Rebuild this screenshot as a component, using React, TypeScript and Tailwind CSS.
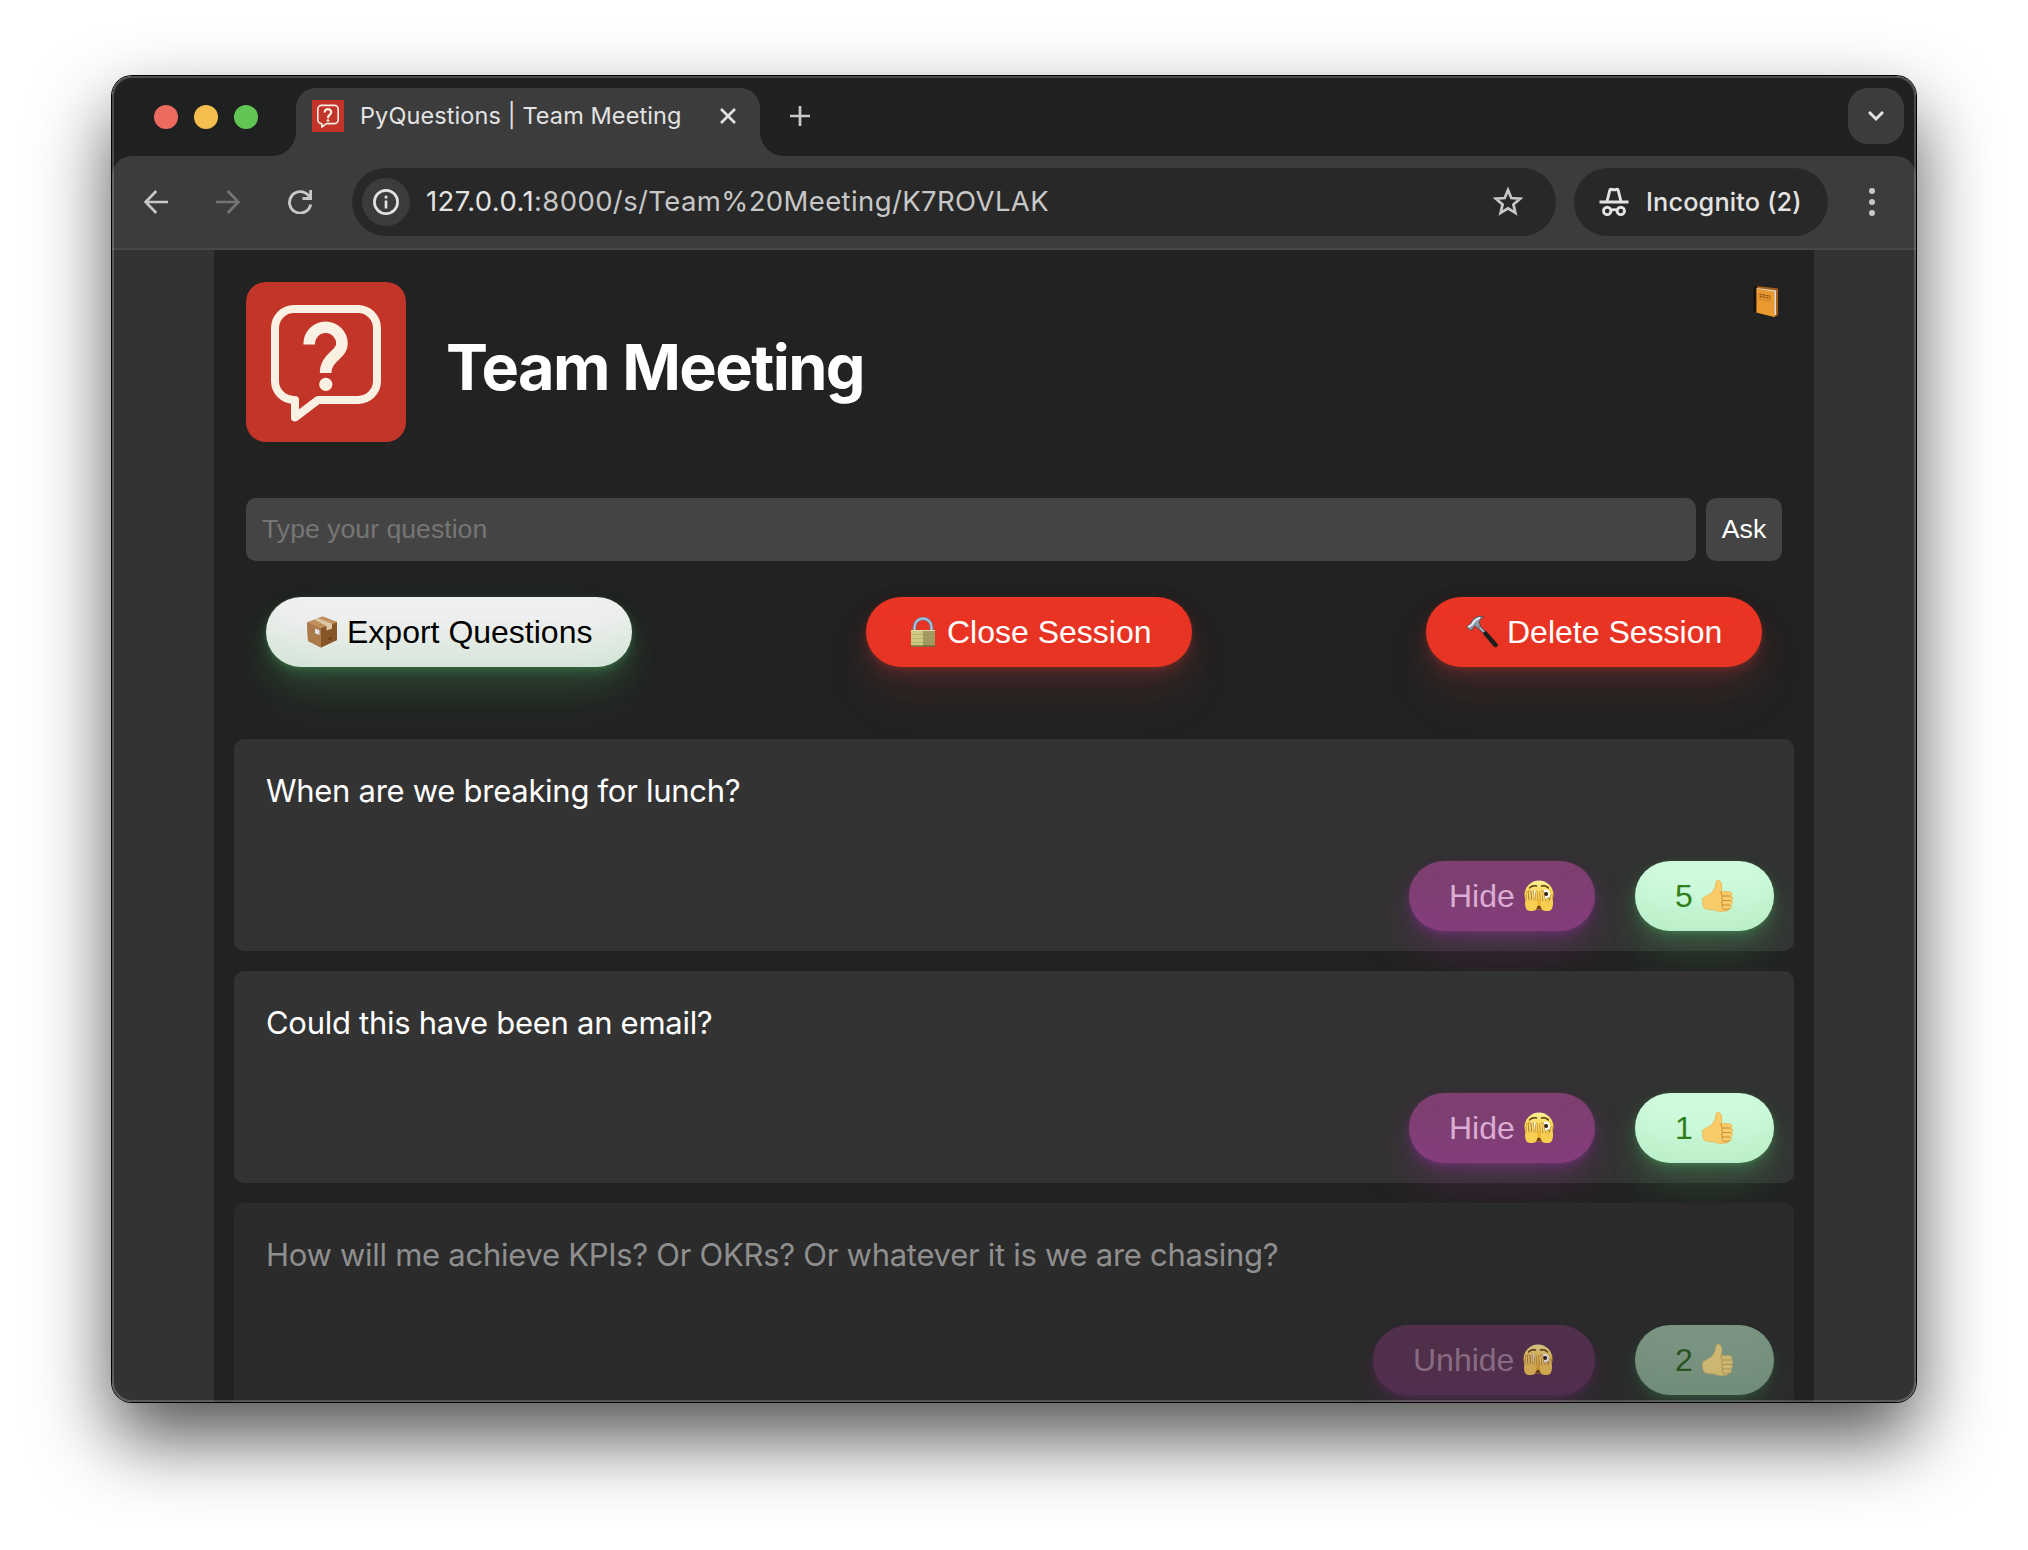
import React from "react";

function Logo({ className }: { className: string }) {
  return (
    <svg viewBox="0 0 160 160" className={className} fill="none">
      <rect width="160" height="160" fill="#c23528" />
      <path
        d="M72 118H112a19 19 0 0 0 19-19V46a19 19 0 0 0-19-19H48a19 19 0 0 0-19 19V99a19 19 0 0 0 19 19h1V135.5Z"
        stroke="#fbf1e3"
        strokeWidth="8"
        strokeLinejoin="round"
      />
      <path d="M63.2 62.5V61.7A16.4 16.4 0 0 1 96 61.7C96 73 79.6 75 79.6 91" stroke="#fbf1e3" strokeWidth="11.6" />
      <circle cx="79.8" cy="102.3" r="6.6" fill="#fbf1e3" />
    </svg>
  );
}

function BookEmoji() {
  return (
    <svg viewBox="0 0 28 34" className="h-[34px] w-[28px]">
      <path d="M4 1L26 3.5V30L22.500 32L4 27.500Z" fill="#a8611a" />
      <path d="M4.500 3L24 5.500V29.500L22 31L8 27Z" fill="#dcdfe6" />
      <path d="M1.500 2Q3 .6 6 1.400L4.600 3V27.500L1.500 26.500Z" fill="#15130f" />
      <path d="M4.500 3.600L22.600 6.600V32L4.500 27.400Z" fill="#e9992f" />
      <path d="M7.500 9.200L18.500 11.200M7.500 11.500L18.500 13.500" stroke="#9a5a16" strokeWidth="1.500" strokeDasharray="2.500 .8" />
      <path d="M7.500 14.200L18.500 16.200" stroke="#b97522" strokeWidth=".7" />
    </svg>
  );
}

function BoxEmoji() {
  return (
    <svg viewBox="0 0 32 34" className="h-[34px] w-[32px]">
      <path d="M1 7.500L16.500 1.500L31 7V25L15 32.500L2 26Z" fill="#a87748" />
      <path d="M1 7.500L15 13V32.500L2 26Z" fill="#ac7b4c" />
      <path d="M15 13L31 7.500V25L15 32.500Z" fill="#865629" />
      <path d="M1 7.500L16.500 1.500L31 7L15 13Z" fill="#c0915f" />
      <path d="M8.500 4.600L12 3.200L26 8.800V13.500L20.500 15.500V11Z" fill="#ddc7a8" />
      <path d="M9 13.500L13.500 15.300V20L9 18.200Z" fill="#dfe3ea" />
      <path d="M21.500 23.500L26 21.500L24 25.500Z" fill="#5d3915" />
    </svg>
  );
}

function LockEmoji() {
  return (
    <svg viewBox="0 0 32 34" className="h-[34px] w-[32px]" fill="none">
      <path d="M8.500 16V12a8.500 8.500 0 0 1 17 0V16" stroke="#6d8fae" strokeWidth="3.400" />
      <path d="M8.500 16V12a8.500 8.500 0 0 1 17 0V16" stroke="#b5cfe6" strokeWidth="1.500" />
      <path d="M5 15H29V31.500H5Z" fill="#a39b62" />
      <path d="M5 15H17V31.500H5Z" fill="#cfc983" />
      <path d="M5 15.500H29" stroke="#dedaa6" />
      <path d="M5 19.500H29M5 23.500H29M5 27.500H29" stroke="#8f8852" strokeOpacity=".3" />
      <path d="M5 31H29" stroke="#6c6736" strokeWidth="1.400" />
    </svg>
  );
}

function HammerEmoji() {
  return (
    <svg viewBox="0 0 32 34" className="h-[34px] w-[32px]" fill="none">
      <path d="M12 11L20 19" stroke="#49525e" strokeWidth="3.400" />
      <path d="M12 11L20 19" stroke="#c3cdd9" strokeWidth="1.600" />
      <path d="M19.500 18.500L29.500 30" stroke="#1d1f1f" strokeWidth="4.400" strokeLinecap="round" />
      <path
        d="M.8 11.500L4.500 9C5.500 6 8 2.500 12 1.500L18 1.200C15 3 13.500 5 13.300 8L14.500 11L11.500 13.500L9.500 11C7.800 10.800 7.200 12 7 14L4 15.500Z"
        fill="#8e9bab"
        stroke="#3b4149"
        strokeWidth=".7"
      />
      <path d="M2 12L5.800 9.800L9 5.500L14 2.500" stroke="#e8eef6" strokeWidth="2" />
    </svg>
  );
}

function PeekEmoji() {
  return (
    <svg viewBox="0 0 32 34" className="h-[34px] w-[32px]" fill="none">
      <defs>
        <linearGradient id="peekFace" x1="0" y1="0" x2="0" y2="1">
          <stop offset="0" stopColor="#fff29a" />
          <stop offset=".45" stopColor="#f8d348" />
          <stop offset="1" stopColor="#e2991f" />
        </linearGradient>
      </defs>
      <circle cx="16" cy="16" r="14.500" fill="url(#peekFace)" />
      <path d="M6.500 9Q9.500 6 13.500 7M18.500 7Q22.500 6 25.500 9" stroke="#5a3a0c" strokeWidth="1.400" strokeLinecap="round" />
      <ellipse cx="9.500" cy="15" rx="4.200" ry="4.300" fill="#fffbe8" />
      <ellipse cx="22.700" cy="15.200" rx="4.600" ry="4.600" fill="#fff" />
      <circle cx="23" cy="15" r="2.100" fill="#2a1a0a" />
      <path d="M13 28.500Q16 25 19 28.500V30H13Z" fill="#6e430f" />
      <path
        d="M3.500 30.500C1.500 27 1.500 22 3.500 18L12 18.500L14.500 21C15 25 14.500 29 12.500 31C10 32.500 5.500 32.500 3.500 30.500Z"
        fill="#f9cf52"
      />
      <path
        d="M28.500 30.500C30.500 27 30.500 22 29 18.500L24.500 21L19.500 20L17.500 22C17 25 17.500 29 19.500 31C22 32.500 26.500 32.500 28.500 30.500Z"
        fill="#f9cf52"
      />
      <path
        d="M4.300 20V13.500M7.200 20L6.600 12.700M9.900 20L9.600 12.500M13 21L13.800 13.500M18.600 21L17.800 13.500M21.300 21L19.600 12.700M25 21.500L25.500 20M28.200 20L28.300 17"
        stroke="#a87420"
        strokeWidth="2.700"
        strokeLinecap="round"
      />
      <path
        d="M4.300 20.500V13.500M7.200 20.500L6.600 12.700M9.900 20.500L9.600 12.500M13 21.500L13.800 13.500M18.600 21.500L17.800 13.500M21.300 21.500L19.600 12.700M25 22V20.500M28.200 21L28.300 17"
        stroke="#f7d468"
        strokeWidth="1.800"
        strokeLinecap="round"
      />
    </svg>
  );
}

function ThumbEmoji() {
  return (
    <svg viewBox="0 0 32 34" className="h-[34px] w-[32px]" fill="none">
      <path
        d="M1 19C2.500 17.500 6 16.500 8.500 14.500C11.500 12 13.500 8.500 14 3.500C14.200 1 17 .4 18.500 2.500C20.500 5.500 20 9 19 12.500L27.500 12.800C30.500 13 30.500 16.500 28.500 17C31.500 17.500 31.300 21 29 21.500C31 22.500 30.500 25.500 28.300 26C30 27 29.500 29.500 27.500 30L25 31.800C20 32.800 15 32.500 12.500 31C8 30.500 4 31 1.800 28.500C.4 26 .3 21 1 19Z"
        fill="#f9cc6a"
        stroke="#e8ac4c"
        strokeWidth=".7"
      />
      <path
        d="M28.500 17H20.500Q18.500 15 19 12.500M29 21.500H20.500M28.300 26H20.500M20.500 17Q18.700 19.500 20.500 21.500Q18.700 24 20.500 26Q19.500 29 21.500 30.500L27.500 30"
        stroke="#c4862f"
        strokeWidth=".9"
      />
    </svg>
  );
}

function TabFlare({ flip }: { flip?: boolean }) {
  return (
    <svg viewBox="0 0 24 24" className={flip ? "h-6 w-6 -scale-x-100" : "h-6 w-6"}>
      <path d="M24 0V24H0A24 24 0 0 0 24 0Z" fill="#3c3c3c" />
    </svg>
  );
}

function TabStrip() {
  return (
    <div className="flex h-[80px] items-end bg-[#1f2120] pl-[42px] pr-3">
      <div className="flex gap-4 self-start pt-[29px]">
        <span className="size-6 rounded-full bg-[#ed6a5e]" />
        <span className="size-6 rounded-full bg-[#f5bf4f]" />
        <span className="size-6 rounded-full bg-[#61c554]" />
      </div>
      <div className="ml-[14px] flex items-end">
        <TabFlare />
        <div className="flex h-[68px] w-[464px] items-center rounded-t-[20px] bg-[#3c3c3c] pb-[12px] pl-4 pr-6">
          <Logo className="size-8" />
          <span className="ml-[16px] whitespace-nowrap text-[23.5px] tracking-[0.1px] text-[#e3e3e3]">
            PyQuestions | Team Meeting
          </span>
          <svg viewBox="0 0 16 16" className="ml-auto size-4" stroke="#e3e3e3" strokeWidth="2.600">
            <path d="M1 1L15 15M15 1L1 15" />
          </svg>
        </div>
        <TabFlare flip />
      </div>
      <svg viewBox="0 0 20 20" className="mb-[30px] ml-[6px] size-5" stroke="#c7c7c7" strokeWidth="2.700">
        <path d="M10 0V20M0 10H20" />
      </svg>
      <div className="mb-3 ml-auto flex h-[56px] w-[56px] items-center justify-center rounded-[20px] bg-[#3c3c3c]">
        <svg viewBox="0 0 16 10" className="h-[10px] w-4" fill="none" stroke="#e3e3e3" strokeWidth="2.900">
          <path d="M1 1L8 8L15 1" />
        </svg>
      </div>
    </div>
  );
}

function Toolbar() {
  return (
    <div className="bg-[#1f2120]">
      <div className="flex h-[94px] items-center rounded-t-[20px] border-b-2 border-[#484848] bg-[#3c3c3c] pl-8 pr-[41px]">
        <svg viewBox="0 0 24 24" className="size-6" fill="none" stroke="#c7c7c7" strokeWidth="2.700">
          <path d="M24 12H2M12.300 1L1.600 12L12.300 23" />
        </svg>
        <svg viewBox="0 0 24 24" className="ml-12 size-6" fill="none" stroke="#757575" strokeWidth="2.700">
          <path d="M0 12H22M11.700 1L22.400 12L11.700 23" />
        </svg>
        <svg viewBox="0 0 24 24" className="ml-12 size-6" fill="none" stroke="#c7c7c7" strokeWidth="2.900">
          <path d="M22.700 14.500A10.700 10.700 0 1 1 20.600 5.700L22.300 8M22.700 0V8.500H14.500" />
        </svg>
        <div className="ml-10 flex h-[68px] w-[1204px] items-center rounded-full bg-[#282828] pl-[10px] pr-[33px]">
          <div className="flex size-12 items-center justify-center rounded-full bg-[#3c3c3c]">
            <svg viewBox="0 0 26 26" className="size-[26px]" fill="none" stroke="#e3e3e3" strokeWidth="2.700">
              <circle cx="13" cy="13" r="11.600" />
              <path d="M13 11.500V19.500M13 6.700V9.400" />
            </svg>
          </div>
          <span className="ml-[16px] whitespace-nowrap text-[27.5px] tracking-[0.38px] text-[#c7c7c7]">
            <span className="text-[#e3e3e3]">127.0.0.1</span>:8000/s/Team%20Meeting/K7ROVLAK
          </span>
          <svg viewBox="0 0 30 30" className="ml-auto size-[30px]" fill="none" stroke="#c7c7c7" strokeWidth="2.700">
            <path d="M15 3L18.300 11L27 11.700L20.400 17.400L22.400 26L15 21.400L7.600 26L9.600 17.400L3 11.700L11.700 11Z" />
          </svg>
        </div>
        <div className="ml-[18px] flex h-[68px] w-[254px] items-center rounded-full bg-[#282828] pl-[25px]">
          <svg viewBox="0 0 30 30" className="size-[30px]" fill="none" stroke="#e3e3e3" strokeWidth="2.900">
            <path d="M.5 15H29.500" strokeWidth="3.200" />
            <path d="M8 14.500L10.800 3.400Q11.200 1.800 12.600 2.300Q15 3.300 17.400 2.300Q18.800 1.800 19.200 3.400L22 14.500" />
            <circle cx="8.200" cy="23.900" r="3.700" />
            <circle cx="21.800" cy="23.900" r="3.700" />
            <path d="M11.500 23.200Q15 22 18.500 23.200" />
          </svg>
          <span className="ml-[17px] whitespace-nowrap text-[25.300px] font-medium tracking-[0.15px] text-[#e3e3e3]">
            Incognito (2)
          </span>
        </div>
        <div className="ml-auto flex flex-col gap-[5px]">
          <span className="size-[6px] rounded-full bg-[#c7c7c7]" />
          <span className="size-[6px] rounded-full bg-[#c7c7c7]" />
          <span className="size-[6px] rounded-full bg-[#c7c7c7]" />
        </div>
      </div>
    </div>
  );
}

const pill =
  "flex h-[70px] items-center rounded-full pl-10 text-[32px] whitespace-nowrap font-['Liberation_Sans',Arial,sans-serif]";
const greenGlow =
  "shadow-[inset_0_-50px_36px_-28px_rgba(98,190,120,0.2),0_2px_4px_rgba(80,184,100,0.15),0_4px_8px_rgba(80,184,100,0.15),0_8px_16px_rgba(80,184,100,0.15),0_16px_32px_rgba(80,184,110,0.15),0_32px_64px_rgba(80,184,100,0.1)]";
const greenGlowDim =
  "shadow-[inset_0_-50px_36px_-28px_rgba(72,110,82,0.2),0_2px_4px_rgba(80,184,100,0.08),0_4px_8px_rgba(80,184,100,0.08),0_8px_16px_rgba(80,184,100,0.08),0_16px_32px_rgba(80,184,110,0.08)]";
const redGlow =
  "shadow-[inset_0_-50px_36px_-28px_rgba(187,60,44,0.08),0_2px_4px_rgba(187,60,50,0.15),0_4px_8px_rgba(187,60,50,0.15),0_8px_16px_rgba(187,60,55,0.15),0_16px_32px_rgba(187,60,65,0.14),0_32px_64px_rgba(187,70,54,0.07)]";
const purpleGlow =
  "shadow-[inset_0_-50px_36px_-28px_rgba(163,50,180,0.2),0_2px_4px_rgba(163,54,177,0.15),0_4px_8px_rgba(163,54,177,0.15),0_8px_16px_rgba(163,54,177,0.15),0_16px_32px_rgba(163,54,170,0.15),0_32px_64px_rgba(163,54,120,0.1)]";
const purpleGlowDim =
  "shadow-[inset_0_-50px_36px_-28px_rgba(98,42,107,0.2),0_2px_4px_rgba(163,54,177,0.08),0_4px_8px_rgba(163,54,177,0.08),0_8px_16px_rgba(163,54,177,0.08),0_16px_32px_rgba(163,54,170,0.08)]";

type Question = { text: string; votes: number; hidden?: boolean };

const questions: Question[] = [
  { text: "When are we breaking for lunch?", votes: 5 },
  { text: "Could this have been an email?", votes: 1 },
  { text: "How will me achieve KPIs? Or OKRs? Or whatever it is we are chasing?", votes: 2, hidden: true },
];

function QuestionCard({ text, votes, hidden }: Question) {
  return (
    <div
      className={`flex h-[212px] shrink-0 flex-col justify-between rounded-[10px] p-5 ${hidden ? "bg-[#2b2b2b]" : "bg-[#333333]"}`}
    >
      <p
        className={`ml-3 mt-3 whitespace-nowrap text-[31px] leading-10 tracking-[-0.28px] ${hidden ? "text-[#8f8f8f]" : "text-white"}`}
      >
        {text}
      </p>
      <div className="flex justify-end gap-10">
        <button
          className={`${pill} ${hidden ? `${purpleGlowDim} w-[222px] bg-[#50304a] text-[#876b82]` : `${purpleGlow} w-[186px] bg-[#7d4070] text-[#dbadd2]`}`}
        >
          {hidden ? "Unhide" : "Hide"}
          <span className={`ml-[8px] ${hidden ? "opacity-75" : ""}`}>
            <PeekEmoji />
          </span>
        </button>
        <button
          className={`${pill} w-[139px] ${hidden ? `${greenGlowDim} bg-[#7b9482] text-[#295220]` : `${greenGlow} bg-[#cffbdc] text-[#2f7d1b]`}`}
        >
          {votes}
          <span className={`ml-[9px] ${hidden ? "opacity-65" : ""}`}>
            <ThumbEmoji />
          </span>
        </button>
      </div>
    </div>
  );
}

function Page() {
  return (
    <div className="flex min-h-0 flex-1 justify-center bg-[#333333]">
      <main className="w-[1600px] bg-[#222222]">
        <header className="flex h-[248px] items-start px-8 pt-8">
          <Logo className="size-40 rounded-[20px]" />
          <h1 className="ml-10 mt-[45px] whitespace-nowrap text-[63px] font-bold leading-[80px] tracking-[-1.600px] text-white">
            Team Meeting
          </h1>
          <span className="ml-auto mr-0.5 mt-[3px]">
            <BookEmoji />
          </span>
        </header>
        <form className="flex gap-[10px] px-8 font-['Liberation_Sans',Arial,sans-serif] text-[26.670px]">
          <div className="flex h-[63px] flex-1 items-center rounded-[10px] bg-[#444444] pb-[2px] pl-4 text-[#757575]">
            Type your question
          </div>
          <button type="button" className="h-[63px] w-[76px] rounded-[10px] bg-[#444444] pb-[2px] text-white">
            Ask
          </button>
        </form>
        <div className="mt-9 flex justify-between px-[52px]">
          <button className={`${pill} ${greenGlow} w-[366px] bg-[#efefef] text-black`}>
            <BoxEmoji />
            <span className="ml-[9px]">Export Questions</span>
          </button>
          <button className={`${pill} ${redGlow} w-[326px] bg-[#ea3424] text-white`}>
            <LockEmoji />
            <span className="ml-[9px]">Close Session</span>
          </button>
          <button className={`${pill} ${redGlow} w-[336px] bg-[#ea3424] text-white`}>
            <HammerEmoji />
            <span className="ml-[9px]">Delete Session</span>
          </button>
        </div>
        <div className="mt-[72px] flex flex-col gap-5 px-5">
          {questions.map((q) => (
            <QuestionCard key={q.text} {...q} />
          ))}
        </div>
      </main>
    </div>
  );
}

export default function App() {
  return (
    <div className="h-[1550px] w-[2028px] overflow-hidden bg-white pl-[112px] pt-[76px] font-[Inter,sans-serif]">
      <div className="relative h-[1326px] w-[1804px] rounded-[20px] shadow-[0_0_0_1px_#000,0_36px_76px_rgba(0,0,0,0.68)]">
        <div className="flex h-full flex-col overflow-hidden rounded-[20px]">
          <TabStrip />
          <Toolbar />
          <Page />
        </div>
        <div className="pointer-events-none absolute inset-0 rounded-[20px] border-2 border-white/20" />
      </div>
    </div>
  );
}
